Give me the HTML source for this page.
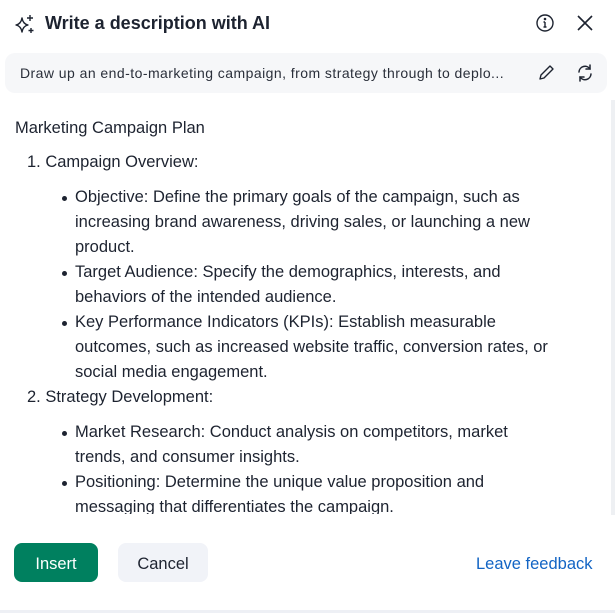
<!DOCTYPE html>
<html><head><meta charset="utf-8"><style>
*{margin:0;padding:0;box-sizing:border-box}
body{width:615px;height:613px;background:#fff;font-family:"Liberation Sans",sans-serif;color:#1d2330;position:relative;overflow:hidden}
.title{position:absolute;left:45px;top:13px;font-size:18px;font-weight:bold;color:#1d2330}
.prompt{position:absolute;left:5px;top:53px;width:602px;height:40px;background:#f6f7f9;border-radius:10px}
.prompt span{position:absolute;left:15px;top:12px;font-size:14px;color:#2a2f3a;white-space:nowrap;letter-spacing:0.45px}
.content{position:absolute;left:0;top:100px;width:605px;height:414px;overflow:hidden;font-size:16.5px;line-height:25px;white-space:nowrap}
.l{position:absolute}
.dot{position:absolute;width:5px;height:5px;border-radius:50%;background:#1d2330}
.btn{position:absolute;top:543px;height:39px;border-radius:8px;font-size:16.5px;line-height:43px;text-align:center}
</style></head><body>
<svg style="position:absolute;left:14px;top:14px" width="22" height="20" viewBox="0 0 22 20" fill="none" stroke="#1d2330" stroke-width="1.4" stroke-linejoin="round"><path d="M8 4 Q9 10 14 11 Q9 12 8 18 Q7 12 2 11 Q7 10 8 4Z"/><path d="M16 1v6M13 4h6M17 14v5M14.5 16.5h5"/></svg>
<div class="title">Write a description with AI</div>
<svg style="position:absolute;left:535px;top:13px" width="20" height="20" viewBox="0 0 20 20" fill="none" stroke="#1d2330" stroke-width="1.4"><circle cx="10" cy="10" r="8"/><path d="M10 9v5M8.5 14h3M8.5 9h1.5"/><circle cx="10" cy="6" r="0.6" fill="#1d2330"/></svg>
<svg style="position:absolute;left:576px;top:14px" width="18" height="18" viewBox="0 0 18 18" stroke="#1d2330" stroke-width="1.6"><path d="M2 2l14 14M16 2L2 16"/></svg>
<div class="prompt"><span>Draw up an end-to-marketing campaign, from strategy through to deplo...</span>
<svg style="position:absolute;left:531px;top:10px" width="20" height="20" viewBox="0 0 20 20" fill="none" stroke="#1d2330" stroke-width="1.4" stroke-linejoin="round"><path d="M4 16l1-4 9-9 3 3-9 9-4 1z"/></svg>
<svg style="position:absolute;left:569px;top:10px" width="22" height="20" viewBox="0 0 22 20" fill="none" stroke="#1d2330" stroke-width="1.5" stroke-linecap="round"><path d="M5 9a6 6 0 0 1 11-3"/><path d="M17 11a6 6 0 0 1-11 3"/><path d="M16 2v4h-4M6 18v-4h4"/></svg>
</div>
<div class="content">
<div class="l" style="left:15px;top:16px">Marketing Campaign Plan</div>
<div class="l" style="left:27px;top:50px">1. Campaign Overview:</div>
<div class="dot" style="left:62px;top:96px"></div>
<div class="l" style="left:75px;top:85px">Objective: Define the primary goals of the campaign, such as<br>increasing brand awareness, driving sales, or launching a new<br>product.</div>
<div class="dot" style="left:62px;top:171px"></div>
<div class="l" style="left:75px;top:160px">Target Audience: Specify the demographics, interests, and<br>behaviors of the intended audience.</div>
<div class="dot" style="left:62px;top:221px"></div>
<div class="l" style="left:75px;top:210px">Key Performance Indicators (KPIs): Establish measurable<br>outcomes, such as increased website traffic, conversion rates, or<br>social media engagement.</div>
<div class="l" style="left:27px;top:285px">2. Strategy Development:</div>
<div class="dot" style="left:62px;top:331px"></div>
<div class="l" style="left:75px;top:320px">Market Research: Conduct analysis on competitors, market<br>trends, and consumer insights.</div>
<div class="dot" style="left:62px;top:381px"></div>
<div class="l" style="left:75px;top:370px">Positioning: Determine the unique value proposition and<br>messaging that differentiates the campaign.</div>
</div>
<div style="position:absolute;left:611px;top:100px;width:4px;height:415px;background:#eef0f3"></div>
<div class="btn" style="left:14px;width:84px;background:#00805f;color:#fff">Insert</div>
<div class="btn" style="left:118px;width:90px;background:#f1f3f8;color:#1d2330">Cancel</div>
<div style="position:absolute;left:476px;top:555px;font-size:16.5px;color:#1264c4">Leave feedback</div>
<div style="position:absolute;left:0;top:610px;width:615px;height:3px;background:#eef0f5"></div>
</body></html>
